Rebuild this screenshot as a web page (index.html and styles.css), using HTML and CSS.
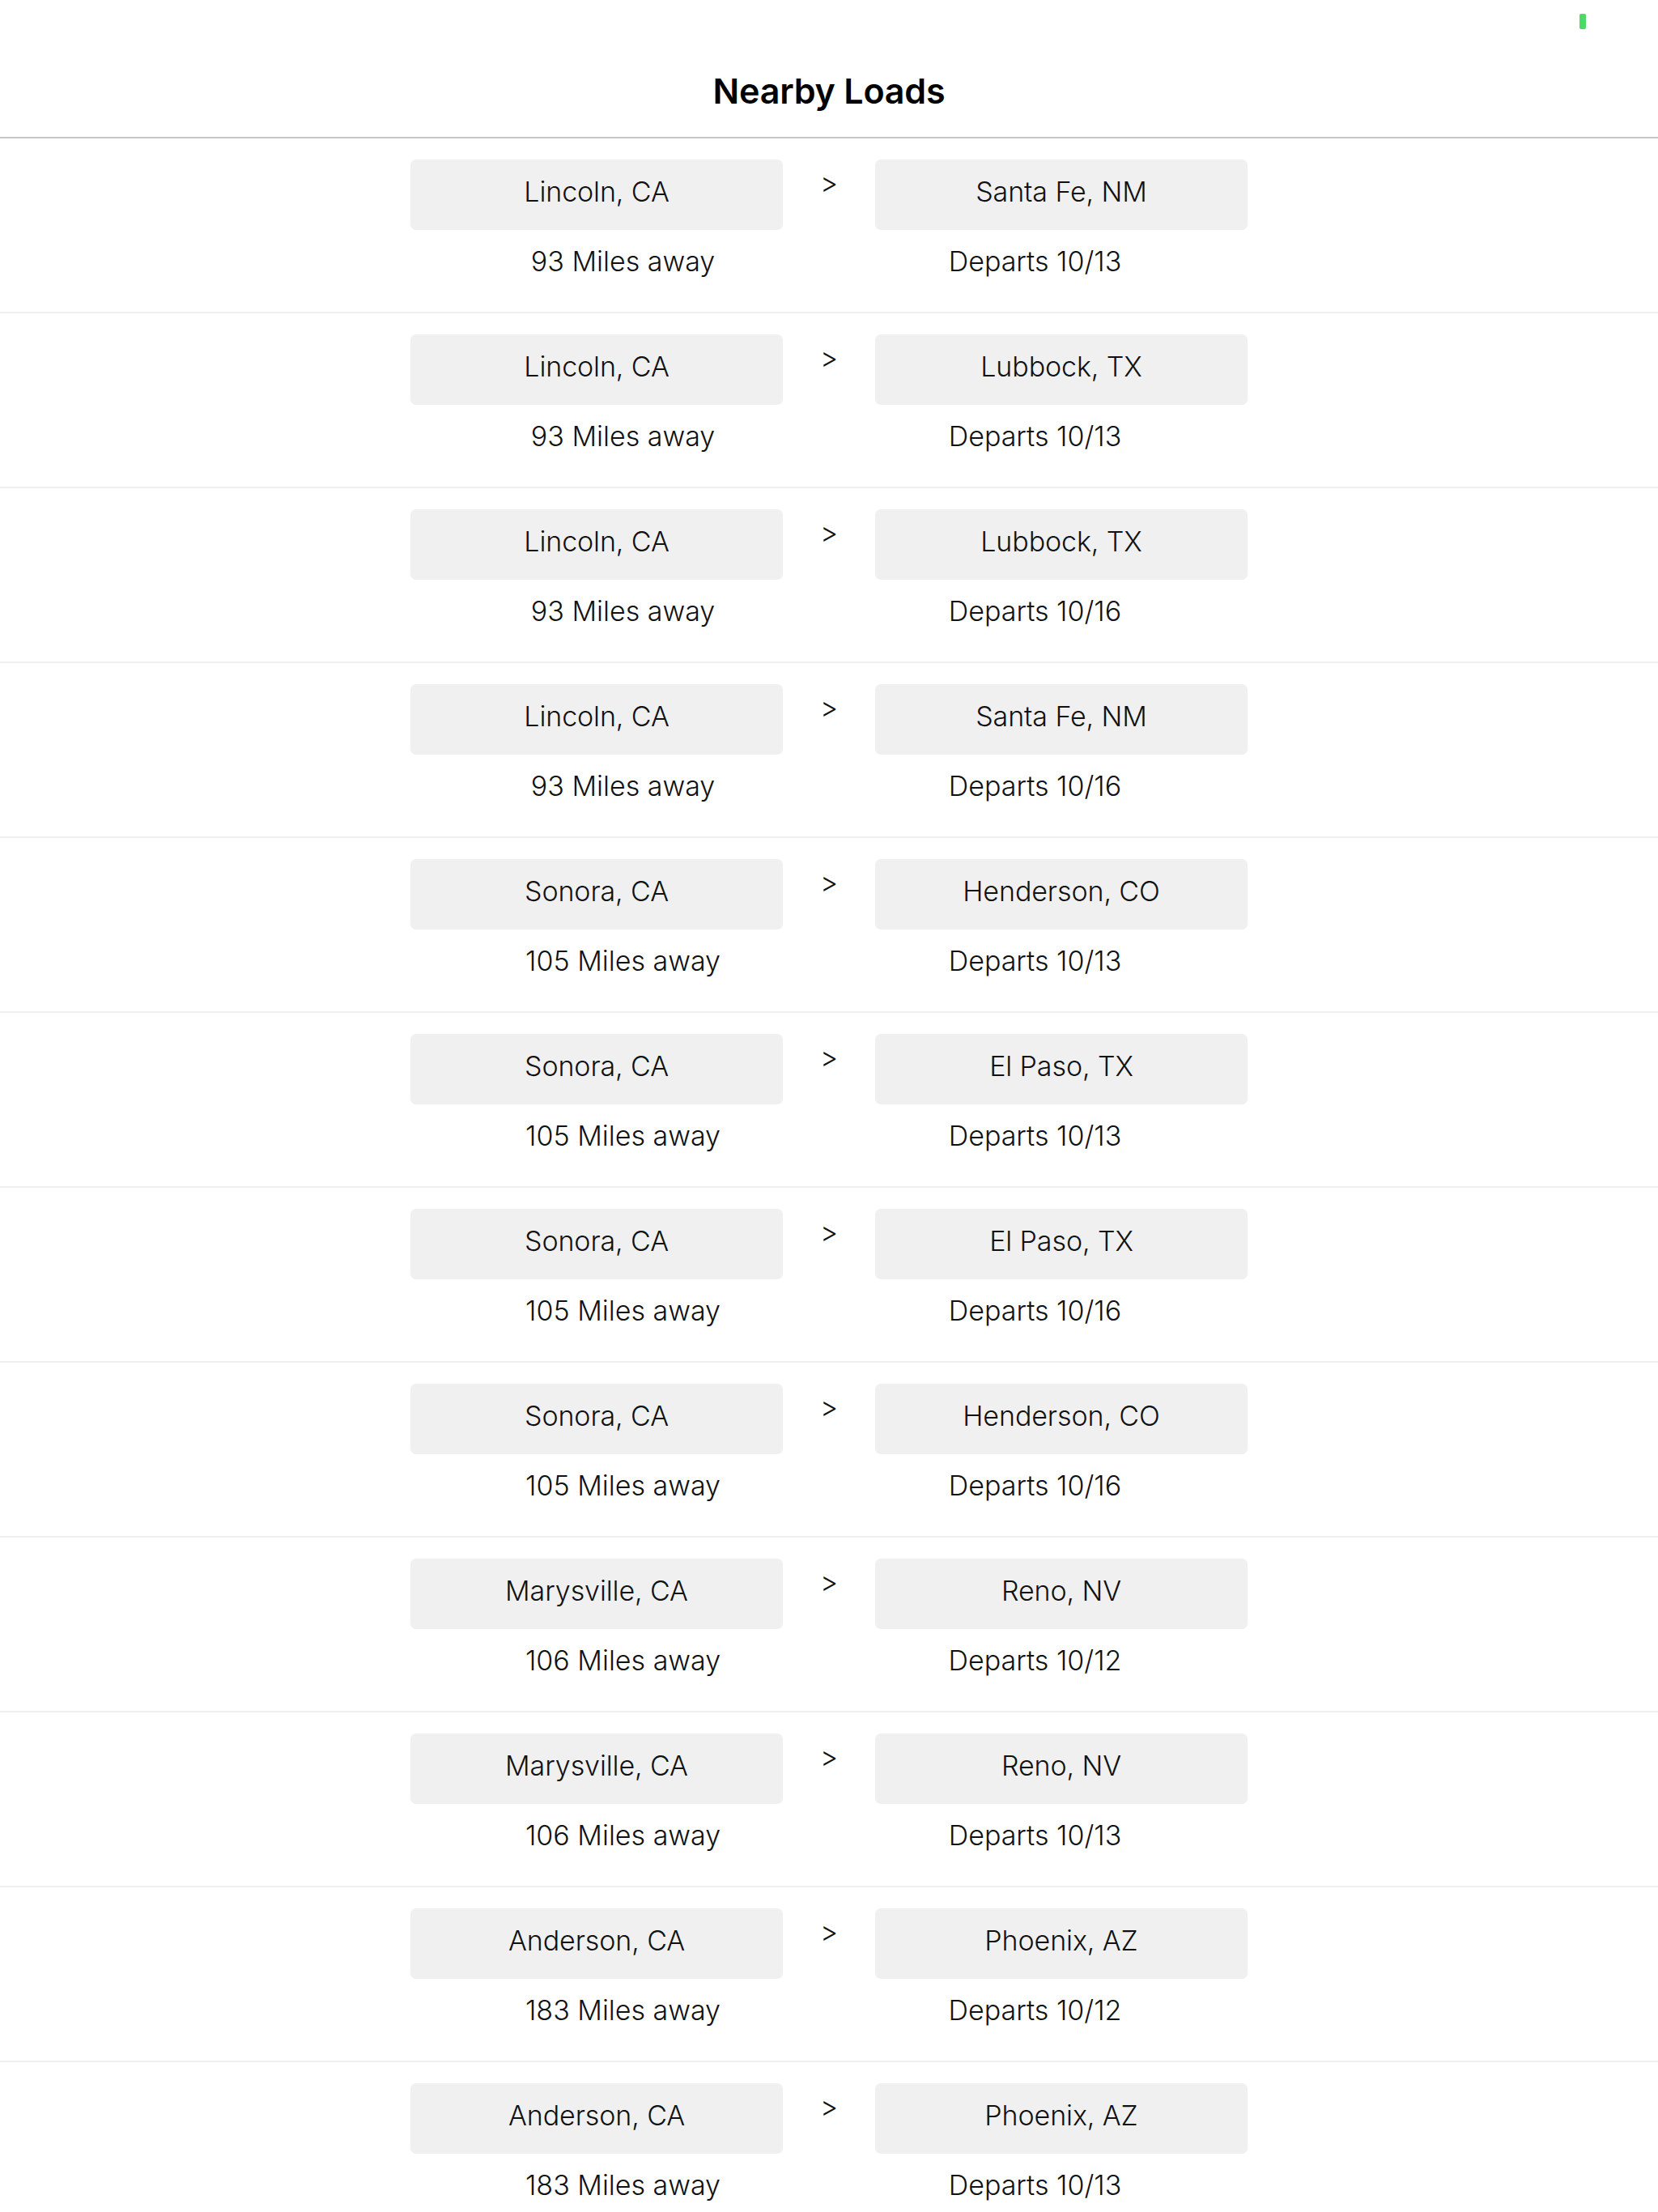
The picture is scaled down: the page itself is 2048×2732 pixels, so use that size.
FILE: index.html
```html
<!DOCTYPE html>
<html lang="en">
<head>
<meta charset="utf-8">
<title>Nearby Loads</title>
<link rel="stylesheet" href="styles.css">
</head>
<body>
<div class="status-bar"><span class="battery"></span></div>
<header class="nav"><h1 class="nav-title">Nearby Loads</h1></header>
<main class="list">
  <div class="load">
    <div class="city from">Lincoln, CA</div><div class="chev">&gt;</div><div class="city to">Santa Fe, NM</div>
    <div class="sub left">93 Miles away</div><div class="sub right">Departs 10/13</div>
  </div>
  <div class="load">
    <div class="city from">Lincoln, CA</div><div class="chev">&gt;</div><div class="city to">Lubbock, TX</div>
    <div class="sub left">93 Miles away</div><div class="sub right">Departs 10/13</div>
  </div>
  <div class="load">
    <div class="city from">Lincoln, CA</div><div class="chev">&gt;</div><div class="city to">Lubbock, TX</div>
    <div class="sub left">93 Miles away</div><div class="sub right">Departs 10/16</div>
  </div>
  <div class="load">
    <div class="city from">Lincoln, CA</div><div class="chev">&gt;</div><div class="city to">Santa Fe, NM</div>
    <div class="sub left">93 Miles away</div><div class="sub right">Departs 10/16</div>
  </div>
  <div class="load">
    <div class="city from">Sonora, CA</div><div class="chev">&gt;</div><div class="city to">Henderson, CO</div>
    <div class="sub left">105 Miles away</div><div class="sub right">Departs 10/13</div>
  </div>
  <div class="load">
    <div class="city from">Sonora, CA</div><div class="chev">&gt;</div><div class="city to">El Paso, TX</div>
    <div class="sub left">105 Miles away</div><div class="sub right">Departs 10/13</div>
  </div>
  <div class="load">
    <div class="city from">Sonora, CA</div><div class="chev">&gt;</div><div class="city to">El Paso, TX</div>
    <div class="sub left">105 Miles away</div><div class="sub right">Departs 10/16</div>
  </div>
  <div class="load">
    <div class="city from">Sonora, CA</div><div class="chev">&gt;</div><div class="city to">Henderson, CO</div>
    <div class="sub left">105 Miles away</div><div class="sub right">Departs 10/16</div>
  </div>
  <div class="load">
    <div class="city from">Marysville, CA</div><div class="chev">&gt;</div><div class="city to">Reno, NV</div>
    <div class="sub left">106 Miles away</div><div class="sub right">Departs 10/12</div>
  </div>
  <div class="load">
    <div class="city from">Marysville, CA</div><div class="chev">&gt;</div><div class="city to">Reno, NV</div>
    <div class="sub left">106 Miles away</div><div class="sub right">Departs 10/13</div>
  </div>
  <div class="load">
    <div class="city from">Anderson, CA</div><div class="chev">&gt;</div><div class="city to">Phoenix, AZ</div>
    <div class="sub left">183 Miles away</div><div class="sub right">Departs 10/12</div>
  </div>
  <div class="load">
    <div class="city from">Anderson, CA</div><div class="chev">&gt;</div><div class="city to">Phoenix, AZ</div>
    <div class="sub left">183 Miles away</div><div class="sub right">Departs 10/13</div>
  </div>
</main>
</body>
</html>
```
FILE: styles.css
```css
html, body {
  margin: 0;
  padding: 0;
  background: #ffffff;
}
body {
  font-family: Inter, "Noto Sans", "Liberation Sans", sans-serif;
  color: #111111;
  height: 2732px;
  overflow: hidden;
}
.status-bar {
  height: 40px;
  display: flex;
  justify-content: flex-end;
  align-items: flex-start;
  padding: 17px 89px 0 0;
  box-sizing: border-box;
}
.battery {
  width: 8px;
  height: 19px;
  border-radius: 2px;
  background: #4cd964;
}
.nav {
  height: 129px;
  border-bottom: 2px solid #c6c6c6;
  display: flex;
  justify-content: center;
  align-items: flex-start;
}
.nav-title {
  margin: 0;
  padding-top: 46px;
  font-size: 43px;
  line-height: 52px;
  font-weight: 600;
  color: #000;
  letter-spacing: -0.2px;
}
.load {
  display: grid;
  grid-template-columns: 460px 49px 16px 49px 460px;
  grid-template-rows: 87px 41px;
  row-gap: 18px;
  justify-content: center;
  padding: 26px 0 42px;
  border-bottom: 2px solid #efefef;
}
.city {
  grid-row: 1;
  background: #f0f0f0;
  border-radius: 7px;
  display: flex;
  align-items: center;
  justify-content: center;
  padding-bottom: 8px;
  box-sizing: border-box;
  font-size: 34px;
  font-weight: 300;
  line-height: 41px;
  letter-spacing: -0.1px;
}
.city.from { grid-column: 1; }
.city.to { grid-column: 5; }
.chev {
  grid-row: 1;
  grid-column: 3;
  align-self: start;
  justify-self: center;
  margin-top: 8px;
  font-size: 34px;
  font-weight: 300;
  line-height: 41px;
}
.sub {
  grid-row: 2;
  text-align: center;
  font-size: 34px;
  line-height: 41px;
  font-weight: 300;
  letter-spacing: 0;
}
.sub.left { grid-column: 1 / 4; }
.sub.right { grid-column: 3 / 6; }
```
